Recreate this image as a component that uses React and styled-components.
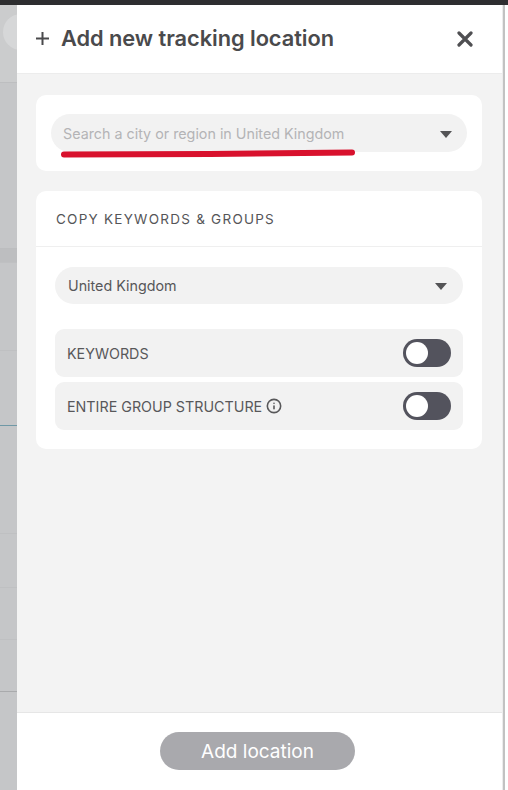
import React from 'react';
import styled, { createGlobalStyle } from 'styled-components';
import { Info } from 'lucide-react';

const GlobalStyle = createGlobalStyle`
  html, body {
    margin: 0;
    padding: 0;
    width: 100%;
    height: 100%;
    overflow: hidden;
    font-family: Inter, "Noto Sans", "Liberation Sans", sans-serif;
  }
  * { box-sizing: border-box; }
`;

const Screen = styled.div`
  width: 508px;
  height: 790px;
  display: flex;
  flex-direction: column;
  background: #c6c7c9;
`;

const TopBar = styled.div`
  height: 5px;
  background: #2e2e30;
  flex: none;
`;

const Row = styled.div`
  flex: 1;
  display: flex;
  min-height: 0;
`;

// dimmed app behind the drawer
const Behind = styled.div`
  width: 17px;
  flex: none;
  display: flex;
  flex-direction: column;
  background: #c5c6c8;
  overflow: hidden;
`;

const BehindTop = styled.div`
  height: 78px;
  background: #cbcccd;
  border-bottom: 1px solid #bdbec0;
  display: flex;
  align-items: flex-start;
  padding-top: 9px;
`;

const BehindCircle = styled.div`
  width: 36px;
  height: 36px;
  margin-left: 3px;
  border-radius: 50%;
  background: #d6d7d8;
  flex: none;
`;

const BehindBand = styled.div`
  height: ${p => p.h}px;
  background: ${p => p.bg || 'transparent'};
  border-bottom: 1px solid ${p => p.line || '#bfc0c2'};
  flex: none;
`;

const Panel = styled.div`
  width: 485px;
  flex: none;
  display: flex;
  flex-direction: column;
  background: #f3f3f3;
`;

const Edge = styled.div`
  flex: 1;
  display: flex;
  background: #ffffff;
  &::before {
    content: '';
    width: 1px;
    background: #ececec;
  }
  &::after {
    content: '';
    width: 2px;
    background: #c2c2c2;
  }
`;

const Header = styled.div`
  height: 69px;
  flex: none;
  background: #ffffff;
  border-bottom: 1px solid #ececec;
  display: flex;
  align-items: center;
  justify-content: space-between;
  padding: 0 28px 0 18px;
`;

const Title = styled.h1`
  margin: 0 0 2px;
  font-size: 21.8px;
  font-weight: 600;
  color: #4a4a4c;
  display: flex;
  align-items: center;
  gap: 11px;
  letter-spacing: -0.05px;
`;

const Plus = styled.svg`
  flex: none;
  margin-top: 1px;
`;

const CloseButton = styled.button`
  border: 0;
  background: none;
  padding: 0;
  width: 18px;
  height: 18px;
  display: flex;
  align-items: center;
  justify-content: center;
  cursor: pointer;
`;

const Body = styled.div`
  flex: 1;
  padding: 21px 20px 0 19px;
  display: flex;
  flex-direction: column;
  gap: 20px;
`;

const Card = styled.div`
  position: relative;
  background: #ffffff;
  border-radius: 10px;
  padding: ${p => p.pad || '0'};
`;

const CardHead = styled.div`
  height: 56px;
  display: flex;
  align-items: center;
  padding: 0 20px;
  border-bottom: 1px solid #efefef;
  font-size: 13.5px;
  letter-spacing: 1.25px;
  color: #555558;
`;

const CardContent = styled.div`
  padding: 20px 19px 19px;
  display: flex;
  flex-direction: column;
`;

const Select = styled.div`
  height: ${p => p.h || 38}px;
  border-radius: 20px;
  background: #f2f2f2;
  display: flex;
  align-items: center;
  justify-content: space-between;
  padding: 0 ${p => p.pr || 15}px 0 ${p => p.pl || 12}px;
  font-size: 14.3px;
  color: ${p => (p.placeholder ? '#b4b4b6' : '#575759')};
  margin-bottom: ${p => p.mb || 0}px;
`;

const Caret = styled.span`
  width: 0;
  height: 0;
  border-left: 6px solid transparent;
  border-right: 6px solid transparent;
  border-top: 7px solid #545456;
  margin-top: 2px;
`;

const Scribble = styled.svg`
  position: absolute;
  left: 24px;
  top: 52px;
  pointer-events: none;
`;

const ToggleList = styled.div`
  display: flex;
  flex-direction: column;
  gap: 5px;
`;

const ToggleRow = styled.div`
  height: 48px;
  border-radius: 9px;
  background: #f2f2f2;
  display: flex;
  align-items: center;
  justify-content: space-between;
  padding: 0 12px 0 12px;
  font-size: 14.3px;
  color: #58585a;
`;

const Label = styled.span`
  display: flex;
  align-items: center;
  gap: 4px;
`;

const Switch = styled.span`
  width: 48px;
  height: 28px;
  border-radius: 14px;
  background: #53535d;
  display: flex;
  align-items: center;
  padding: 0 3px;
  &::before {
    content: '';
    width: 22px;
    height: 22px;
    border-radius: 50%;
    background: #ffffff;
  }
`;

const Footer = styled.div`
  height: 78px;
  flex: none;
  background: #ffffff;
  border-top: 1px solid #e6e6e6;
  display: flex;
  justify-content: center;
  padding-top: 19px;
`;

const AddButton = styled.button`
  width: 195px;
  height: 38px;
  border: 0;
  border-radius: 19px;
  background: #a9a9ad;
  color: #ffffff;
  font-family: inherit;
  font-size: 19px;
  cursor: pointer;
  margin-right: 4px;
`;

export default function App() {
  return (
    <>
      <GlobalStyle />
      <Screen>
        <TopBar />
        <Row>
          <Behind>
            <BehindTop>
              <BehindCircle />
            </BehindTop>
            <BehindBand h={166} line="#bcbdbf" />
            <BehindBand h={14} bg="#bdbec0" />
            <BehindBand h={88} />
            <BehindBand h={75} line="#6f98a6" />
            <BehindBand h={108} />
            <BehindBand h={54} />
            <BehindBand h={52} />
            <BehindBand h={52} line="#a9aaac" />
          </Behind>
          <Panel>
            <Header>
              <Title>
                <Plus width="15" height="15" viewBox="0 0 15 15">
                  <path d="M7.5 1 V14 M1 7.5 H14" stroke="#4a4a4c" strokeWidth="2" />
                </Plus>
                Add new tracking location
              </Title>
              <CloseButton aria-label="Close">
                <svg width="16" height="16" viewBox="0 0 16 16">
                  <path d="M2 2 L14 14 M14 2 L2 14" stroke="#4f4f52" strokeWidth="3.2" strokeLinecap="round" />
                </svg>
              </CloseButton>
            </Header>
            <Body>
              <Card pad="19px 15px">
                <Select placeholder="1">
                  Search a city or region in United Kingdom
                  <Caret />
                </Select>
                <Scribble width="300" height="12" viewBox="0 0 300 12">
                  <path d="M4 7.6 L150 7 L292 5.4" stroke="#d8112d" strokeWidth="6" strokeLinecap="round" strokeLinejoin="round" fill="none" />
                </Scribble>
              </Card>
              <Card>
                <CardHead>COPY KEYWORDS &amp; GROUPS</CardHead>
                <CardContent>
                  <Select h={37} pl={13} pr={16} mb={25}>
                    United Kingdom
                    <Caret />
                  </Select>
                  <ToggleList>
                    <ToggleRow>
                      <Label>KEYWORDS</Label>
                      <Switch />
                    </ToggleRow>
                    <ToggleRow>
                      <Label>
                        ENTIRE GROUP STRUCTURE
                        <Info size={16} strokeWidth={2.4} color="#58585a" />
                      </Label>
                      <Switch />
                    </ToggleRow>
                  </ToggleList>
                </CardContent>
              </Card>
            </Body>
            <Footer>
              <AddButton>Add location</AddButton>
            </Footer>
          </Panel>
          <Edge />
        </Row>
      </Screen>
    </>
  );
}
